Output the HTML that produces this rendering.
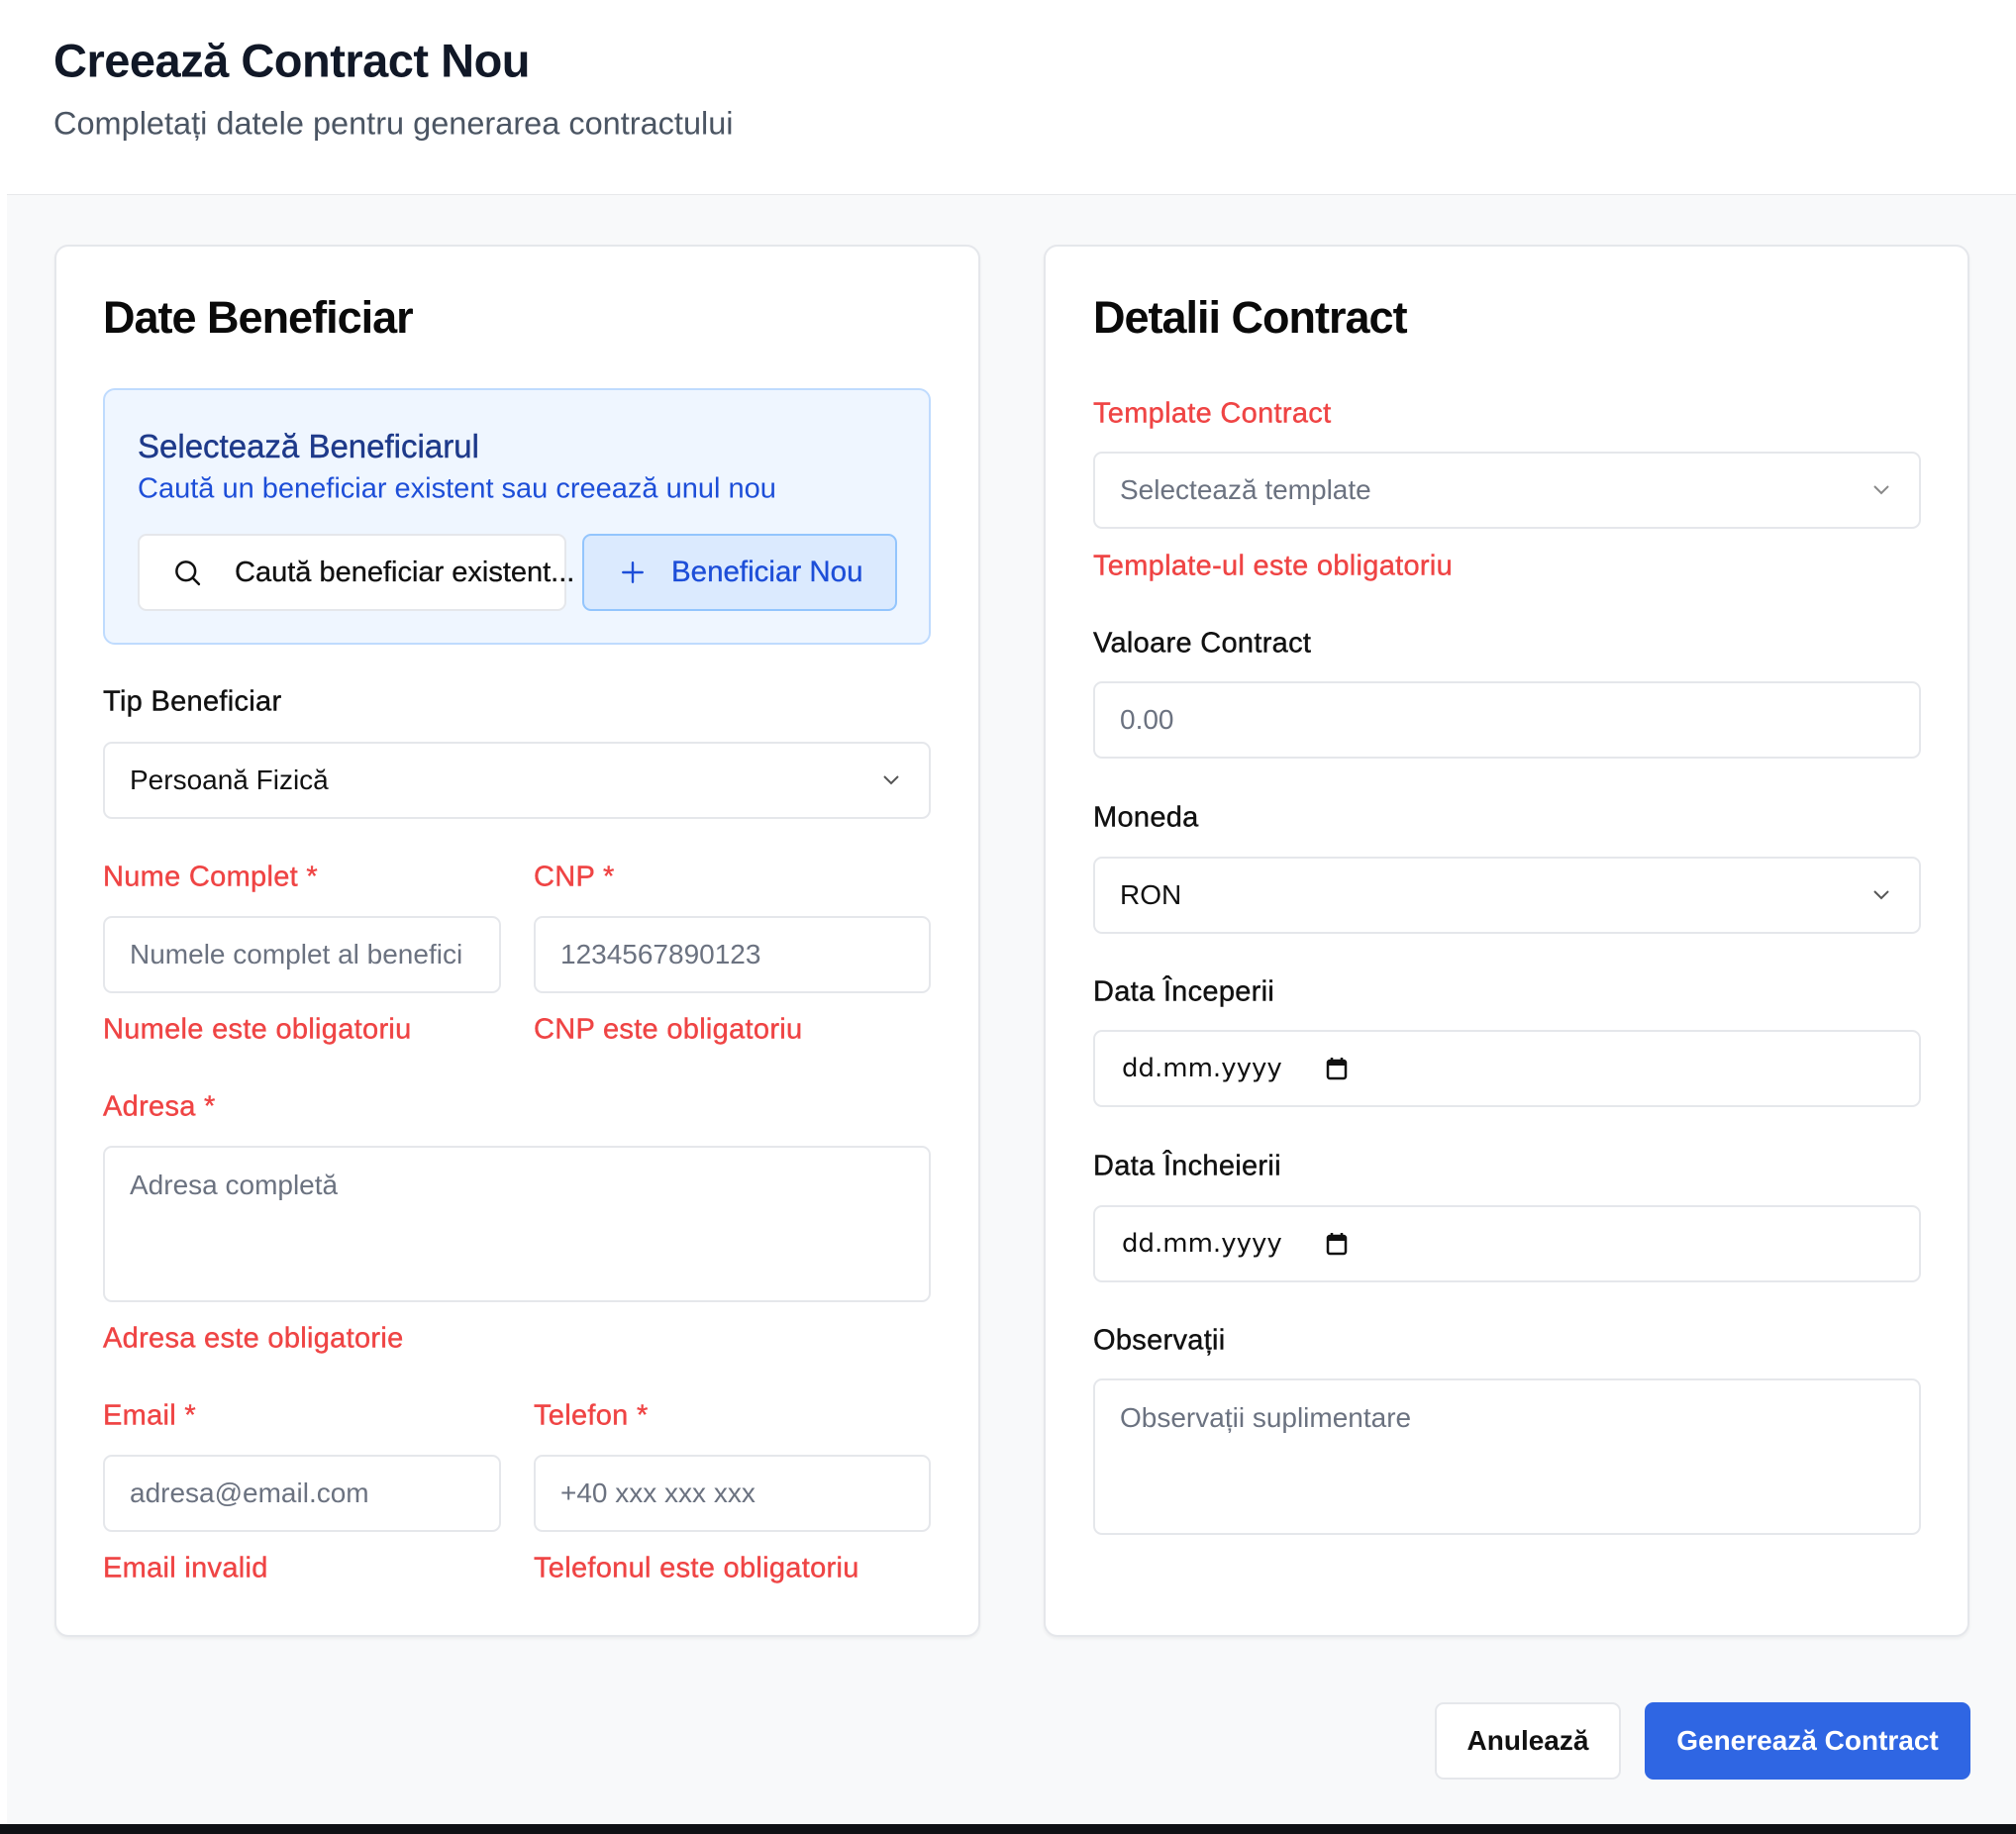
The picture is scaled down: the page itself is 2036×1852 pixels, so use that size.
<!DOCTYPE html>
<html><head><meta charset="utf-8"><style>
*{box-sizing:border-box;margin:0;padding:0}
body{width:2036px;height:1852px;position:relative;background:#fff;font-family:"Liberation Sans",sans-serif;overflow:hidden;color:#111827}
.a{position:absolute;white-space:nowrap}
.gray{position:absolute;left:7px;top:196px;right:0;height:1646px;background:#f8f9fa;border-top:1px solid #e7e8ea}
.bar{position:absolute;left:0;top:1842px;width:2036px;height:10px;background:#0f1115}
.card{position:absolute;top:247px;width:935px;height:1406px;background:#fff;border:2px solid #e5e7eb;border-radius:14px;box-shadow:0 2px 3px rgba(0,0,0,.05)}
.h2{font-size:45px;font-weight:bold;letter-spacing:-1px;color:#0a0a0a}
.lbl{font-size:29px;letter-spacing:0.3px;color:#111;transform:translateY(-50%);-webkit-text-stroke:0.4px currentColor}
.red{color:#ef4444}
.in{position:absolute;background:#fff;border:2px solid #e5e7eb;border-radius:9px;font-size:28px;color:#6b7280;padding-left:25px;display:flex;align-items:center;white-space:nowrap}
.in svg{flex-shrink:0}
.chev{position:absolute;right:28px;top:50%;margin-top:-8px}
</style></head><body>
<div class="a" style="left:54px;top:61px;transform:translateY(-50%);font-size:47px;font-weight:bold;color:#111827;letter-spacing:-0.5px">Creează Contract Nou</div>
<div class="a" style="left:54px;top:125px;transform:translateY(-50%);font-size:32.5px;color:#4b5563">Completați datele pentru generarea contractului</div>
<div class="gray"></div>
<div class="bar"></div>

<div class="card" style="left:55px"></div>
<div class="card" style="left:1054px"></div>

<div class="a h2" style="left:104px;top:321px;transform:translateY(-50%)">Date Beneficiar</div>
<div class="a" style="left:104px;top:392px;width:836px;height:259px;background:#eff6ff;border:2px solid #bfdbfe;border-radius:12px"></div>
<div class="a" style="left:139px;top:451px;transform:translateY(-50%);font-size:33px;color:#1e3a8a;-webkit-text-stroke:0.4px currentColor">Selectează Beneficiarul</div>
<div class="a" style="left:139px;top:494px;transform:translateY(-50%);font-size:29px;color:#1d4ed8">Caută un beneficiar existent sau creează unul nou</div>
<div class="in" style="left:139px;top:539px;width:433px;height:78px;color:#111;padding-left:33px;overflow:visible">
<svg width="30" height="30" viewBox="0 0 24 24" fill="none" stroke="#111" stroke-width="2" stroke-linecap="round"><circle cx="11" cy="11" r="7.5"/><path d="M17 17l4.5 4.5"/></svg>
<span style="margin-left:33px;font-size:29px;-webkit-text-stroke:0.3px #111">Caută beneficiar existent...</span></div>
<div class="in" style="left:588px;top:539px;width:318px;height:78px;background:#dbeafe;border-color:#93c5fd;color:#1d4ed8;padding-left:36px">
<svg width="26" height="26" viewBox="0 0 24 24" fill="none" stroke="#1d4ed8" stroke-width="2.2" stroke-linecap="round"><path d="M12 3v18M3 12h18"/></svg>
<span style="margin-left:26px;font-size:29.5px;-webkit-text-stroke:0.3px #1d4ed8">Beneficiar Nou</span></div>

<div class="a lbl" style="left:104px;top:709px">Tip Beneficiar</div>
<div class="in" style="left:104px;top:749px;width:836px;height:78px;color:#111">Persoană Fizică<svg class="chev" width="20" height="14" viewBox="0 0 20 14" fill="none" stroke="#555" stroke-width="2"><path d="M3 4l7 7 7-7"/></svg></div>

<div class="a lbl red" style="left:104px;top:886px">Nume Complet *</div>
<div class="a lbl red" style="left:539px;top:886px">CNP *</div>
<div class="in" style="left:104px;top:925px;width:402px;height:78px;overflow:hidden">Numele complet al benefici</div>
<div class="in" style="left:539px;top:925px;width:401px;height:78px">1234567890123</div>
<div class="a lbl red" style="left:104px;top:1040px">Numele este obligatoriu</div>
<div class="a lbl red" style="left:539px;top:1040px">CNP este obligatoriu</div>

<div class="a lbl red" style="left:104px;top:1118px">Adresa *</div>
<div class="in" style="left:104px;top:1157px;width:836px;height:158px;align-items:flex-start;padding-top:22px">Adresa completă</div>
<div class="a lbl red" style="left:104px;top:1352px">Adresa este obligatorie</div>

<div class="a lbl red" style="left:104px;top:1430px">Email *</div>
<div class="a lbl red" style="left:539px;top:1430px">Telefon *</div>
<div class="in" style="left:104px;top:1469px;width:402px;height:78px">adresa@email.com</div>
<div class="in" style="left:539px;top:1469px;width:401px;height:78px">+40 xxx xxx xxx</div>
<div class="a lbl red" style="left:104px;top:1584px">Email invalid</div>
<div class="a lbl red" style="left:539px;top:1584px">Telefonul este obligatoriu</div>

<div class="a h2" style="left:1104px;top:321px;transform:translateY(-50%)">Detalii Contract</div>
<div class="a lbl red" style="left:1104px;top:418px">Template Contract</div>
<div class="in" style="left:1104px;top:456px;width:836px;height:78px">Selectează template<svg class="chev" width="20" height="14" viewBox="0 0 20 14" fill="none" stroke="#888" stroke-width="2"><path d="M3 4l7 7 7-7"/></svg></div>
<div class="a lbl red" style="left:1104px;top:572px">Template-ul este obligatoriu</div>
<div class="a lbl" style="left:1104px;top:650px">Valoare Contract</div>
<div class="in" style="left:1104px;top:688px;width:836px;height:78px">0.00</div>
<div class="a lbl" style="left:1104px;top:826px">Moneda</div>
<div class="in" style="left:1104px;top:865px;width:836px;height:78px;color:#111">RON<svg class="chev" width="20" height="14" viewBox="0 0 20 14" fill="none" stroke="#555" stroke-width="2"><path d="M3 4l7 7 7-7"/></svg></div>
<div class="a lbl" style="left:1104px;top:1002px">Data Începerii</div>
<div class="in" style="left:1104px;top:1040px;width:836px;height:78px;color:#111;padding-left:27px;font-family:'DejaVu Sans',sans-serif;font-size:26px">dd.mm.yyyy<svg style="margin-left:44px" width="22" height="24" viewBox="0 0 22 24"><rect x="2" y="4" width="18" height="18" rx="2" fill="none" stroke="#111" stroke-width="2.5"/><rect x="2" y="4" width="18" height="5" fill="#111"/><path d="M6 1v4M16 1v4" stroke="#111" stroke-width="2.5"/></svg></div>
<div class="a lbl" style="left:1104px;top:1178px">Data Încheierii</div>
<div class="in" style="left:1104px;top:1217px;width:836px;height:78px;color:#111;padding-left:27px;font-family:'DejaVu Sans',sans-serif;font-size:26px">dd.mm.yyyy<svg style="margin-left:44px" width="22" height="24" viewBox="0 0 22 24"><rect x="2" y="4" width="18" height="18" rx="2" fill="none" stroke="#111" stroke-width="2.5"/><rect x="2" y="4" width="18" height="5" fill="#111"/><path d="M6 1v4M16 1v4" stroke="#111" stroke-width="2.5"/></svg></div>
<div class="a lbl" style="left:1104px;top:1354px">Observații</div>
<div class="in" style="left:1104px;top:1392px;width:836px;height:158px;align-items:flex-start;padding-top:22px">Observații suplimentare</div>

<div class="in" style="left:1449px;top:1719px;width:188px;height:78px;color:#111;padding:0;justify-content:center;font-weight:bold">Anulează</div>
<div class="in" style="left:1661px;top:1719px;width:329px;height:78px;background:#2f66e3;border-color:#2f66e3;color:#fff;padding:0;justify-content:center;font-weight:bold">Generează Contract</div>
</body></html>
